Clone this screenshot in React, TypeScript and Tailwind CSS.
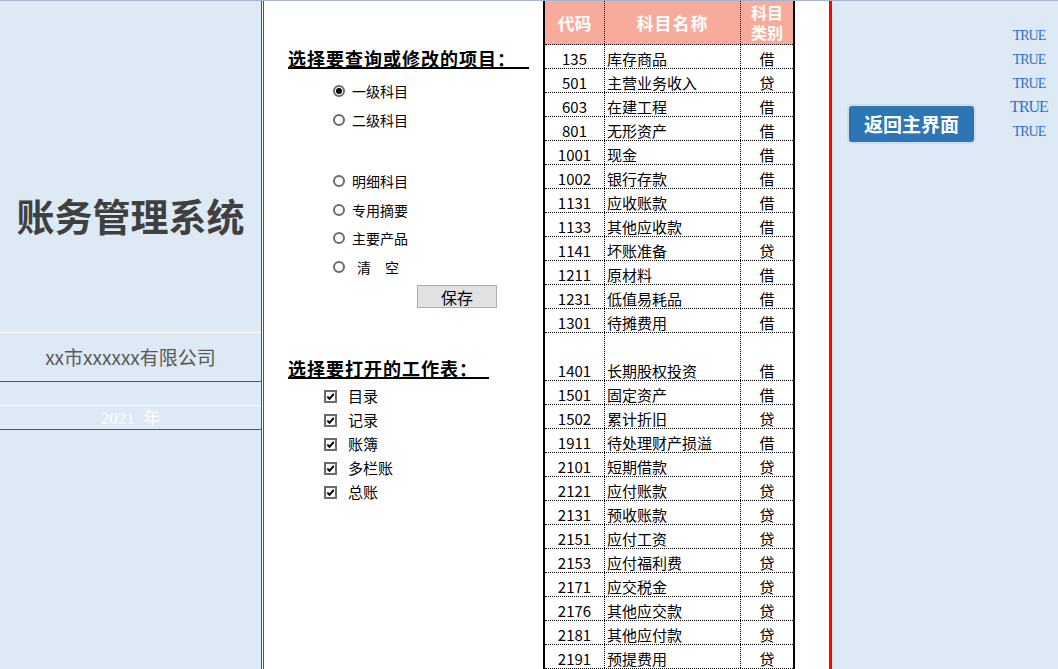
import React from "react";

type Row = { code: string; name: string; kind: string; tall?: boolean };

const rows: Row[] = [
  { code: "135", name: "库存商品", kind: "借" },
  { code: "501", name: "主营业务收入", kind: "贷" },
  { code: "603", name: "在建工程", kind: "借" },
  { code: "801", name: "无形资产", kind: "借" },
  { code: "1001", name: "现金", kind: "借" },
  { code: "1002", name: "银行存款", kind: "借" },
  { code: "1131", name: "应收账款", kind: "借" },
  { code: "1133", name: "其他应收款", kind: "借" },
  { code: "1141", name: "坏账准备", kind: "贷" },
  { code: "1211", name: "原材料", kind: "借" },
  { code: "1231", name: "低值易耗品", kind: "借" },
  { code: "1301", name: "待摊费用", kind: "借" },
  { code: "1401", name: "长期股权投资", kind: "借", tall: true },
  { code: "1501", name: "固定资产", kind: "借" },
  { code: "1502", name: "累计折旧", kind: "贷" },
  { code: "1911", name: "待处理财产损溢", kind: "借" },
  { code: "2101", name: "短期借款", kind: "贷" },
  { code: "2121", name: "应付账款", kind: "贷" },
  { code: "2131", name: "预收账款", kind: "贷" },
  { code: "2151", name: "应付工资", kind: "贷" },
  { code: "2153", name: "应付福利费", kind: "贷" },
  { code: "2171", name: "应交税金", kind: "贷" },
  { code: "2176", name: "其他应交款", kind: "贷" },
  { code: "2181", name: "其他应付款", kind: "贷" },
  { code: "2191", name: "预提费用", kind: "贷" },
];

function Radio({ label, checked, h }: { label: React.ReactNode; checked?: boolean; h: string }) {
  return (
    <div className={`flex items-center ${h} pl-[69px]`}>
      <span className="flex h-[12px] w-[12px] items-center justify-center rounded-full border-2 border-[#6b6b6b] bg-white">
        {checked && <span className="h-[6px] w-[6px] rounded-full bg-black" />}
      </span>
      <span className="ml-[7px] text-[14px] leading-[16px] text-black">{label}</span>
    </div>
  );
}

function Check({ label }: { label: string }) {
  return (
    <div className="flex h-[24px] items-center pl-[60px]">
      <span className="flex h-[13px] w-[13px] items-center justify-center border-2 border-[#6b6b6b] bg-white">
        <svg width="9" height="9" viewBox="0 0 9 9">
          <path d="M1.3 4.6 L3.5 6.8 L7.8 1.8" fill="none" stroke="#000" strokeWidth="2" />
        </svg>
      </span>
      <span className="ml-[11px] text-[15px] leading-[16px] text-black">{label}</span>
    </div>
  );
}

export default function App() {
  const cjk = { fontFamily: '"Noto Sans CJK SC", "Noto Sans", sans-serif' };
  return (
    <div
      className="h-[669px] w-[1058px] overflow-hidden border-t border-[#a8b4cc] bg-white"
      style={cjk}
    >
      <div className="flex h-[668px]">
        {/* Left panel */}
        <div className="flex w-[261px] flex-col bg-[#dde9f5]">
          <div className="h-[331px] pt-[195px] text-center">
            <div className="text-[38px] font-bold leading-[38px] text-[#404040]">账务管理系统</div>
          </div>
          <div className="h-[1px] bg-white" />
          <div className="flex h-[48px] items-center justify-center text-[19px] text-[#595959]">
            xx市xxxxxx有限公司
          </div>
          <div className="h-[1px] bg-[#d42020]" />
          <div className="h-[23px]" />
          <div className="h-[1px] bg-white" />
          <div
            className="flex h-[23px] items-center justify-center pt-[2px] text-[17px] text-white"
            style={{ fontFamily: '"Liberation Serif", "Noto Sans CJK SC", serif' }}
          >
            2021&nbsp;&nbsp;年
          </div>
          <div className="h-[1px] bg-[#d42020]" />
        </div>
        <div className="w-[1px] bg-[#d42020]" />
        <div className="w-[1px] bg-white" />
        <div className="w-[1px] bg-[#d42020]" />

        {/* Middle options */}
        <div className="flex w-[279px] flex-col pt-[46px]">
          <div className="pl-[24px]">
            <span className="inline-block w-[241px] border-b-2 border-black text-[18px] font-bold leading-[18px] tracking-[1px] text-black">
              选择要查询或修改的项目：
            </span>
          </div>
          <div className="mt-[6px]">
            <Radio label="一级科目" checked h="h-[28px]" />
            <Radio label="二级科目" h="h-[29px]" />
            <div className="h-[33px]" />
            <Radio label="明细科目" h="h-[28px]" />
            <Radio label="专用摘要" h="h-[29px]" />
            <Radio label="主要产品" h="h-[28px]" />
            <Radio label={<span className="pl-[5px]">清　空</span>} h="h-[29px]" />
          </div>
          <div className="mt-[4px] pl-[153px]">
            <div className="flex h-[23px] w-[80px] items-center justify-center border border-[#adadad] bg-[#e1e1e1] text-[16px] leading-[16px] text-black">
              保存
            </div>
          </div>
          <div className="mt-[49px] pl-[24px]">
            <span className="inline-block w-[201px] border-b-2 border-black text-[18px] font-bold leading-[18px] tracking-[1px] text-black">
              选择要打开的工作表：
            </span>
          </div>
          <div className="mt-[3px]">
            <Check label="目录" />
            <Check label="记录" />
            <Check label="账簿" />
            <Check label="多栏账" />
            <Check label="总账" />
          </div>
        </div>

        {/* Table */}
        <div className="flex w-[252px] flex-col border-x-2 border-black">
          <div className="flex h-[44px] border-b border-dotted border-black bg-[#f9ab9b] text-[17px] font-bold text-white">
            <div className="flex w-[60px] items-center justify-center border-r border-dotted border-black">代码</div>
            <div className="flex w-[136px] items-center justify-center border-r border-dotted border-black tracking-[1px]">
              科目名称
            </div>
            <div className="flex w-[52px] items-center justify-center text-center text-[16px] leading-[20px]">
              <span>
                科目
                <br />
                类别
              </span>
            </div>
          </div>
          {rows.map((r) => (
            <div
              key={r.code}
              className={`flex ${r.tall ? "h-[49px]" : "h-[24px]"} border-b border-dotted border-black text-[15px] leading-[18px] text-black`}
            >
              <div className="flex w-[60px] items-end justify-center border-r border-dotted border-black">{r.code}</div>
              <div className="flex w-[136px] items-end border-r border-dotted border-black pl-[2px]">{r.name}</div>
              <div className="flex w-[52px] items-end justify-center">{r.kind}</div>
            </div>
          ))}
        </div>

        <div className="w-[34px] bg-white" />
        <div className="w-[3px] bg-[#ff0000]" />

        {/* Right panel */}
        <div className="flex flex-1 bg-[#dde9f5]">
          <div className="pl-[15px] pt-[103px]">
            <div className="flex h-[40px] w-[129px] items-center justify-center rounded-[5px] border-2 border-[#d3dbe4] bg-[#2e75b6] text-[19px] font-bold text-white">
              返回主界面
            </div>
          </div>
          <div className="flex-1" />
          <div
            className="flex w-[50px] flex-col pt-[22px] text-center text-[#2f73c4]"
            style={{ fontFamily: '"Liberation Serif", serif' }}
          >
            <div className="flex h-[24px] items-center justify-center text-[14px] tracking-[-1px]">TRUE</div>
            <div className="flex h-[24px] items-center justify-center text-[14px] tracking-[-1px]">TRUE</div>
            <div className="flex h-[24px] items-center justify-center text-[14px] tracking-[-1px]">TRUE</div>
            <div className="flex h-[24px] items-center justify-center text-[16px] tracking-[-1px]">TRUE</div>
            <div className="flex h-[24px] items-center justify-center text-[14px] tracking-[-1px]">TRUE</div>
          </div>
          <div className="w-[4px]" />
        </div>
      </div>
    </div>
  );
}
